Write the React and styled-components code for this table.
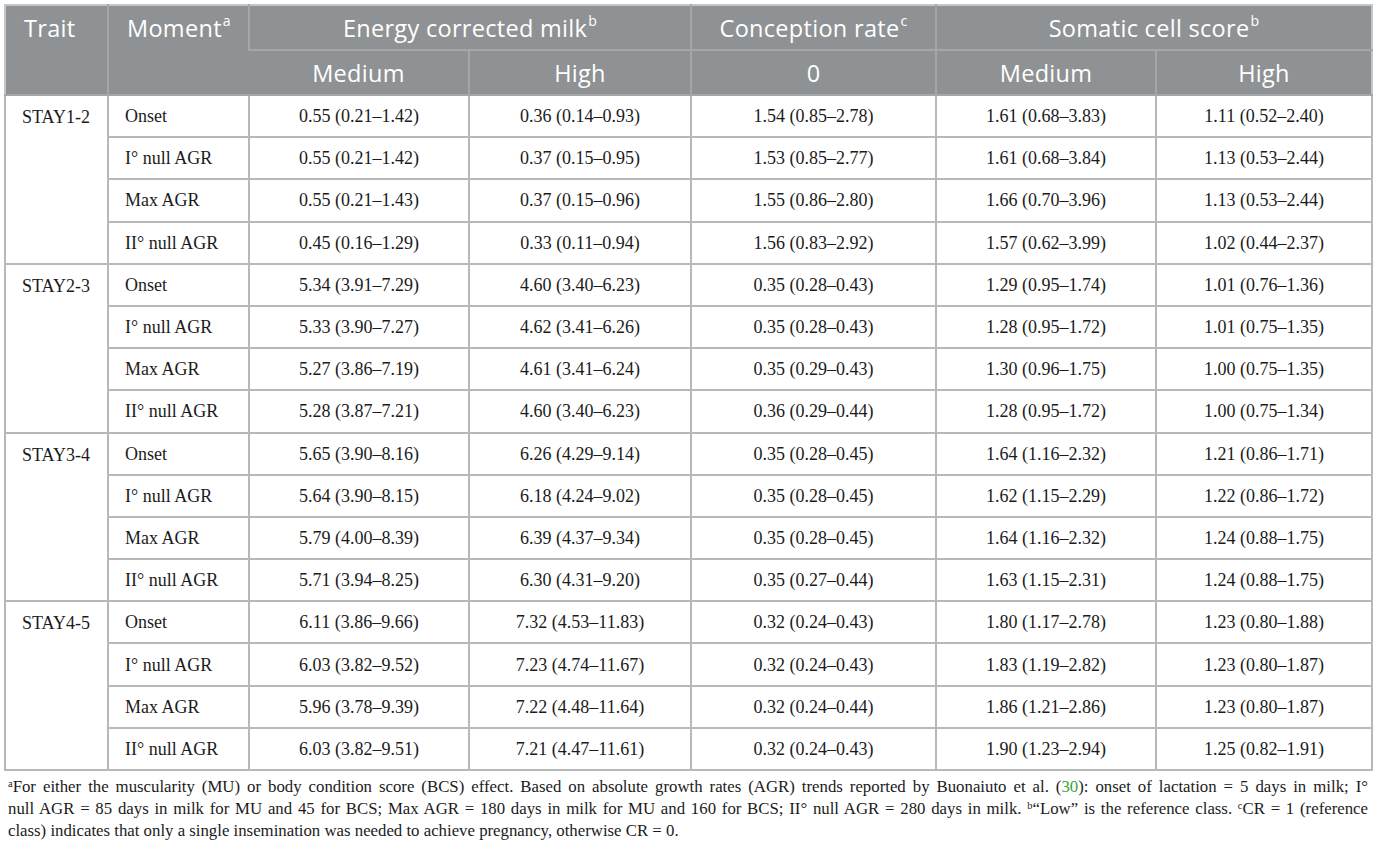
import styled, { createGlobalStyle } from "styled-components";

const GlobalStyle = createGlobalStyle`
  body {
    margin: 0;
    background: #ffffff;
  }
`;

const groups = [
  {
    trait: "STAY1-2",
    rows: [
      ["Onset", "0.55 (0.21–1.42)", "0.36 (0.14–0.93)", "1.54 (0.85–2.78)", "1.61 (0.68–3.83)", "1.11 (0.52–2.40)"],
      ["I° null AGR", "0.55 (0.21–1.42)", "0.37 (0.15–0.95)", "1.53 (0.85–2.77)", "1.61 (0.68–3.84)", "1.13 (0.53–2.44)"],
      ["Max AGR", "0.55 (0.21–1.43)", "0.37 (0.15–0.96)", "1.55 (0.86–2.80)", "1.66 (0.70–3.96)", "1.13 (0.53–2.44)"],
      ["II° null AGR", "0.45 (0.16–1.29)", "0.33 (0.11–0.94)", "1.56 (0.83–2.92)", "1.57 (0.62–3.99)", "1.02 (0.44–2.37)"],
    ],
  },
  {
    trait: "STAY2-3",
    rows: [
      ["Onset", "5.34 (3.91–7.29)", "4.60 (3.40–6.23)", "0.35 (0.28–0.43)", "1.29 (0.95–1.74)", "1.01 (0.76–1.36)"],
      ["I° null AGR", "5.33 (3.90–7.27)", "4.62 (3.41–6.26)", "0.35 (0.28–0.43)", "1.28 (0.95–1.72)", "1.01 (0.75–1.35)"],
      ["Max AGR", "5.27 (3.86–7.19)", "4.61 (3.41–6.24)", "0.35 (0.29–0.43)", "1.30 (0.96–1.75)", "1.00 (0.75–1.35)"],
      ["II° null AGR", "5.28 (3.87–7.21)", "4.60 (3.40–6.23)", "0.36 (0.29–0.44)", "1.28 (0.95–1.72)", "1.00 (0.75–1.34)"],
    ],
  },
  {
    trait: "STAY3-4",
    rows: [
      ["Onset", "5.65 (3.90–8.16)", "6.26 (4.29–9.14)", "0.35 (0.28–0.45)", "1.64 (1.16–2.32)", "1.21 (0.86–1.71)"],
      ["I° null AGR", "5.64 (3.90–8.15)", "6.18 (4.24–9.02)", "0.35 (0.28–0.45)", "1.62 (1.15–2.29)", "1.22 (0.86–1.72)"],
      ["Max AGR", "5.79 (4.00–8.39)", "6.39 (4.37–9.34)", "0.35 (0.28–0.45)", "1.64 (1.16–2.32)", "1.24 (0.88–1.75)"],
      ["II° null AGR", "5.71 (3.94–8.25)", "6.30 (4.31–9.20)", "0.35 (0.27–0.44)", "1.63 (1.15–2.31)", "1.24 (0.88–1.75)"],
    ],
  },
  {
    trait: "STAY4-5",
    rows: [
      ["Onset", "6.11 (3.86–9.66)", "7.32 (4.53–11.83)", "0.32 (0.24–0.43)", "1.80 (1.17–2.78)", "1.23 (0.80–1.88)"],
      ["I° null AGR", "6.03 (3.82–9.52)", "7.23 (4.74–11.67)", "0.32 (0.24–0.43)", "1.83 (1.19–2.82)", "1.23 (0.80–1.87)"],
      ["Max AGR", "5.96 (3.78–9.39)", "7.22 (4.48–11.64)", "0.32 (0.24–0.44)", "1.86 (1.21–2.86)", "1.23 (0.80–1.87)"],
      ["II° null AGR", "6.03 (3.82–9.51)", "7.21 (4.47–11.61)", "0.32 (0.24–0.43)", "1.90 (1.23–2.94)", "1.25 (0.82–1.91)"],
    ],
  },
];

const widths = [103, 141, 220, 222, 245, 220, 216];

const Page = styled.div`
  padding: 4px 4px 0 4px;
  width: 1367px;
`;

const Table = styled.table`
  width: 1367px;
  border-collapse: collapse;
  table-layout: fixed;
  border: 2px solid #c4c6c7;
`;

const HeadCell = styled.th`
  background: #8e9294;
  color: #ffffff;
  font-family: "Open Sans", "Noto Sans", sans-serif;
  font-weight: 400;
  font-size: 23.5px;
  letter-spacing: 0.3px;
  height: 45px;
  padding: 0 18px;
  box-sizing: border-box;
  text-align: ${(p) => (p.$left ? "left" : "center")};
  vertical-align: ${(p) => (p.$top ? "top" : "middle")};
  padding-top: ${(p) => (p.$top ? "6px" : "0")};
  border-left: 2px solid #a3a7a9;
  border-bottom: 2px solid #a3a7a9;
  white-space: nowrap;
  &:first-child {
    border-left: none;
  }
`;

const Sup = styled.sup`
  font-size: 0.6em;
  line-height: 0;
  vertical-align: 0.75em;
  margin-left: 1px;
`;

const Cell = styled.td`
  font-family: "Liberation Serif", "Times New Roman", serif;
  font-size: 18px;
  color: #1b1b1b;
  height: 42.2px;
  box-sizing: border-box;
  padding: 0 ${(p) => (p.$left ? "16px" : "8px")};
  text-align: ${(p) => (p.$left ? "left" : "center")};
  vertical-align: ${(p) => (p.$top ? "top" : "middle")};
  padding-top: ${(p) => (p.$top ? "11px" : "1px")};
  border: 2px solid #b8b8b8;
  white-space: nowrap;
`;

const Notes = styled.div`
  margin: 5px 3px 0 4px;
  font-family: "Liberation Serif", "Times New Roman", serif;
  font-size: 16.8px;
  line-height: 22px;
  color: #1b1b1b;
`;

const NoteLine = styled.span`
  display: block;
  text-align: justify;
  text-align-last: ${(p) => (p.$full ? "justify" : "left")};
`;

const NoteSup = styled.sup`
  font-size: 0.62em;
  line-height: 0;
  vertical-align: 0.5em;
`;

const Ref = styled.span`
  color: #3aa23a;
`;

export default function App() {
  return (
    <Page>
      <GlobalStyle />
      <Table>
        <colgroup>
          {widths.map((w, i) => (
            <col key={i} style={{ width: w }} />
          ))}
        </colgroup>
        <thead>
          <tr>
            <HeadCell rowSpan={2} $left $top>Trait</HeadCell>
            <HeadCell rowSpan={2} $left $top>
              Moment<Sup>a</Sup>
            </HeadCell>
            <HeadCell colSpan={2}>
              Energy corrected milk<Sup>b</Sup>
            </HeadCell>
            <HeadCell>
              Conception rate<Sup>c</Sup>
            </HeadCell>
            <HeadCell colSpan={2}>
              Somatic cell score<Sup>b</Sup>
            </HeadCell>
          </tr>
          <tr>
            <HeadCell>Medium</HeadCell>
            <HeadCell>High</HeadCell>
            <HeadCell>0</HeadCell>
            <HeadCell>Medium</HeadCell>
            <HeadCell>High</HeadCell>
          </tr>
        </thead>
        <tbody>
          {groups.map((g) =>
            g.rows.map((r, i) => (
              <tr key={g.trait + i}>
                {i === 0 && (
                  <Cell rowSpan={4} $left $top>
                    {g.trait}
                  </Cell>
                )}
                <Cell $left>{r[0]}</Cell>
                {r.slice(1).map((v, j) => (
                  <Cell key={j}>{v}</Cell>
                ))}
              </tr>
            ))
          )}
        </tbody>
      </Table>
      <Notes>
        <NoteLine $full>
          <NoteSup>a</NoteSup>For either the muscularity (MU) or body condition score (BCS) effect. Based on absolute growth rates (AGR) trends reported by Buonaiuto et al. (<Ref>30</Ref>): onset of lactation = 5 days in milk; I°
        </NoteLine>
        <NoteLine $full>
          null AGR = 85 days in milk for MU and 45 for BCS; Max AGR = 180 days in milk for MU and 160 for BCS; II° null AGR = 280 days in milk. <NoteSup>b</NoteSup>“Low” is the reference class. <NoteSup>c</NoteSup>CR = 1 (reference
        </NoteLine>
        <NoteLine>
          class) indicates that only a single insemination was needed to achieve pregnancy, otherwise CR = 0.
        </NoteLine>
      </Notes>
    </Page>
  );
}
